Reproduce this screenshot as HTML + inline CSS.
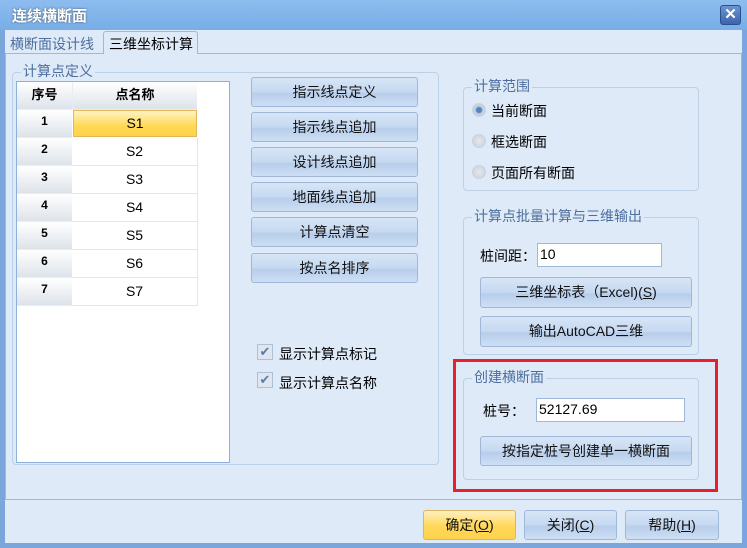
<!DOCTYPE html>
<html><head><meta charset="utf-8"><style>
*{margin:0;padding:0;box-sizing:border-box}
body{width:747px;height:548px;overflow:hidden;background:#dfeaf8;font-family:"Liberation Sans","Noto Sans CJK SC",sans-serif;font-size:14px;color:#000;position:relative}
.a{position:absolute}
.title{left:0;top:0;width:747px;height:30px;background:linear-gradient(#8dbcef,#78aee6);color:#fff;font-weight:bold;font-size:15px;padding:5px 0 0 12px;text-shadow:0 0 2px #456}
.frame{border:1px solid #6b95cb}
.grp{border:1px solid #bcd0e6;border-radius:4px}
.gl{background:#dfeaf8;color:#4d6f9e;padding:0 2px;font-size:14px;line-height:16px}
.btn{border:1px solid #9fb8d8;border-radius:3px;background:linear-gradient(#d7e5f6 0%,#c6d9f1 50%,#b7cdea 55%,#cddff4 100%);text-align:center;font-size:14px;color:#111}
.cell{border-right:1px solid #dbe8f7;border-bottom:1px solid #dbe8f7;text-align:center}
.rh{background:linear-gradient(#fff,#dde3ea);font-weight:bold;font-size:12px;text-align:center;border-bottom:1px solid #e8edf2}
.radio{width:14px;height:14px;border-radius:50%;background:radial-gradient(#e4e8ee,#c9d0d9);border:1px solid #c6d3e3}
.inp{background:#fff;border:1px solid #9fb8d8;padding:2px 0 0 2px;font-size:14px}
.cb{width:16px;height:16px;border:1px solid #aebfd6;background:#dfe6ef;color:#5a7ca8;font-size:13px;text-align:center;line-height:14px}
</style></head><body>
<div class="a title">连续横断面</div>
<div class="a" style="left:720px;top:5px;width:21px;height:20px;border-radius:3px;background:linear-gradient(#6c94d2,#3a64ad);border:1px solid #2b4f8e;color:#fff;font-weight:bold;text-align:center;line-height:18px;font-size:15px">✕</div>
<div class="a" style="left:0;top:30px;width:747px;height:518px;border-left:5px solid #7aa6dc;border-right:5px solid #7aa6dc;border-bottom:5px solid #7aa6dc"></div>
<div class="a" style="left:6px;top:34px;width:95px;height:19px;color:#4d6f9e;padding-left:4px">横断面设计线</div>
<div class="a" style="left:103px;top:31px;width:95px;height:23px;background:#dfeaf8;border:1px solid #9fb8d8;border-bottom:none;border-radius:3px 3px 0 0;padding:2px 0 0 5px;z-index:2">三维坐标计算</div>
<div class="a" style="left:5px;top:53px;width:737px;height:447px;border:1px solid #9fb8d8;border-top-color:#9fb8d8"></div>

<div class="a grp" style="left:12px;top:72px;width:427px;height:393px"></div>
<div class="a gl" style="left:21px;top:63px">计算点定义</div>
<div class="a" style="left:16px;top:81px;width:214px;height:382px;background:#fff;border:1px solid #8fb0da"></div>
<div class="a rh" style="left:17px;top:82px;width:55px;height:28px;line-height:26px;font-size:13px">序号</div>
<div class="a rh" style="left:72px;top:82px;width:125px;height:28px;line-height:26px;font-size:13px;border-left:1px solid #e8edf2">点名称</div>
<div class="a rh" style="left:17px;top:110px;width:55px;height:28px;line-height:22px">1</div>
<div class="a" style="left:73px;top:110px;width:124px;height:27px;background:linear-gradient(#fff3c4,#ffd955 60%,#ffd24a);border:1px solid #e3b85a;text-align:center;line-height:25px">S1</div>
<div class="a rh" style="left:17px;top:138px;width:55px;height:28px;line-height:22px">2</div><div class="a cell" style="left:72px;top:138px;width:126px;height:28px;line-height:27px">S2</div>
<div class="a rh" style="left:17px;top:166px;width:55px;height:28px;line-height:22px">3</div><div class="a cell" style="left:72px;top:166px;width:126px;height:28px;line-height:27px">S3</div>
<div class="a rh" style="left:17px;top:194px;width:55px;height:28px;line-height:22px">4</div><div class="a cell" style="left:72px;top:194px;width:126px;height:28px;line-height:27px">S4</div>
<div class="a rh" style="left:17px;top:222px;width:55px;height:28px;line-height:22px">5</div><div class="a cell" style="left:72px;top:222px;width:126px;height:28px;line-height:27px">S5</div>
<div class="a rh" style="left:17px;top:250px;width:55px;height:28px;line-height:22px">6</div><div class="a cell" style="left:72px;top:250px;width:126px;height:28px;line-height:27px">S6</div>
<div class="a rh" style="left:17px;top:278px;width:55px;height:28px;line-height:22px">7</div><div class="a cell" style="left:72px;top:278px;width:126px;height:28px;line-height:27px">S7</div>

<div class="a btn" style="left:251px;top:77px;width:167px;height:30px;line-height:28px">指示线点定义</div>
<div class="a btn" style="left:251px;top:112px;width:167px;height:30px;line-height:28px">指示线点追加</div>
<div class="a btn" style="left:251px;top:147px;width:167px;height:30px;line-height:28px">设计线点追加</div>
<div class="a btn" style="left:251px;top:182px;width:167px;height:30px;line-height:28px">地面线点追加</div>
<div class="a btn" style="left:251px;top:217px;width:167px;height:30px;line-height:28px">计算点清空</div>
<div class="a btn" style="left:251px;top:253px;width:167px;height:30px;line-height:28px">按点名排序</div>
<div class="a cb" style="left:257px;top:344px">✔</div><div class="a" style="left:279px;top:344px">显示计算点标记</div>
<div class="a cb" style="left:257px;top:372px">✔</div><div class="a" style="left:279px;top:373px">显示计算点名称</div>

<div class="a grp" style="left:463px;top:87px;width:236px;height:104px"></div>
<div class="a gl" style="left:472px;top:78px">计算范围</div>
<div class="a radio" style="left:472px;top:103px;background:radial-gradient(#4f86c6 30%,#c9d0d9 45%)"></div><div class="a" style="left:491px;top:101px">当前断面</div>
<div class="a radio" style="left:472px;top:134px"></div><div class="a" style="left:491px;top:132px">框选断面</div>
<div class="a radio" style="left:472px;top:165px"></div><div class="a" style="left:491px;top:163px">页面所有断面</div>

<div class="a grp" style="left:463px;top:217px;width:236px;height:138px"></div>
<div class="a gl" style="left:472px;top:208px">计算点批量计算与三维输出</div>
<div class="a" style="left:480px;top:246px">桩间距：</div>
<div class="a inp" style="left:537px;top:243px;width:125px;height:24px">10</div>
<div class="a btn" style="left:480px;top:277px;width:212px;height:31px;line-height:29px">三维坐标表（Excel)(<u>S</u>)</div>
<div class="a btn" style="left:480px;top:316px;width:212px;height:31px;line-height:29px">输出AutoCAD三维</div>

<div class="a" style="left:453px;top:359px;width:265px;height:133px;border:3px solid #e8202a"></div>
<div class="a grp" style="left:463px;top:378px;width:236px;height:102px"></div>
<div class="a gl" style="left:472px;top:369px">创建横断面</div>
<div class="a" style="left:483px;top:401px">桩号：</div>
<div class="a inp" style="left:536px;top:398px;width:149px;height:24px">52127.69</div>
<div class="a btn" style="left:480px;top:436px;width:212px;height:30px;line-height:28px">按指定桩号创建单一横断面</div>

<div class="a btn" style="left:423px;top:510px;width:93px;height:30px;line-height:28px;background:linear-gradient(#fff0bd,#ffd85a 55%,#ffd24a);border-color:#d9b56a">确定(<u>O</u>)</div>
<div class="a btn" style="left:524px;top:510px;width:93px;height:30px;line-height:28px">关闭(<u>C</u>)</div>
<div class="a btn" style="left:625px;top:510px;width:94px;height:30px;line-height:28px">帮助(<u>H</u>)</div>
</body></html>
